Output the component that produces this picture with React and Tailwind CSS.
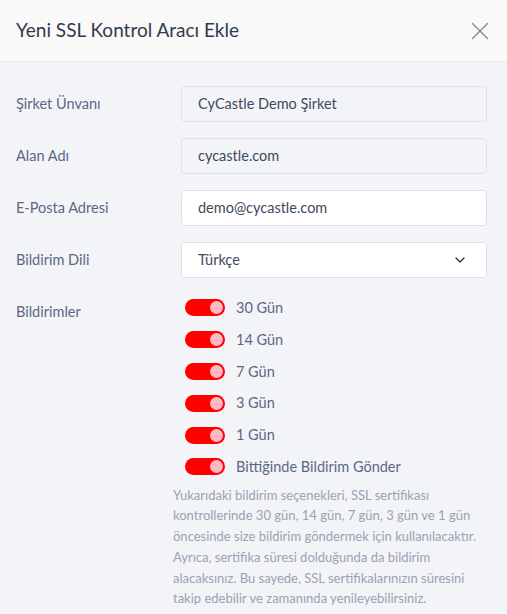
import { X, ChevronDown } from "lucide-react";

const toggles = ["30 Gün", "14 Gün", "7 Gün", "3 Gün", "1 Gün", "Bittiğinde Bildirim Gönder"];

const helpLines = [
  "Yukarıdaki bildirim seçenekleri, SSL sertifikası",
  "kontrollerinde 30 gün, 14 gün, 7 gün, 3 gün ve 1 gün",
  "öncesinde size bildirim göndermek için kullanılacaktır.",
  "Ayrıca, sertifika süresi dolduğunda da bildirim",
  "alacaksınız. Bu sayede, SSL sertifikalarınızın süresini",
  "takip edebilir ve zamanında yenileyebilirsiniz.",
];

const Field = ({ label, children }) => (
  <div className="flex items-center h-[36px] mb-[16px]">
    <div className="w-[165px] text-[14.5px] text-[#5b6882]">{label}</div>
    <div className="flex-1">{children}</div>
  </div>
);

const Toggle = () => (
  <div className="w-[40px] h-[17px] rounded-full bg-[#ff0000] flex items-center justify-end pr-[2px]">
    <div className="w-[13px] h-[13px] rounded-full bg-[#ffb8c4]" />
  </div>
);

export default function App() {
  return (
    <div className="w-[507px] h-[614px] bg-[#f3f4f8] font-['Lato',sans-serif] overflow-hidden">
      {/* Header */}
      <div className="h-[62px] bg-[#f9f9f9] border-b border-[#e6e8ec] flex items-center justify-between pl-[16px] pr-[12px]">
        <h2 className="text-[19px] text-[#2f3a4c]">Yeni SSL Kontrol Aracı Ekle</h2>
        <X className="w-[30px] h-[30px] text-[#888888]" strokeWidth={1.1} />
      </div>

      {/* Body */}
      <div className="pl-[16px] pr-[20px] pt-[24px]">
        <Field label="Şirket Ünvanı">
          <div className="h-[36px] rounded-[4px] border border-[#dde1e8] bg-[#f3f4f8] px-[16px] flex items-center text-[14.5px] text-[#3f4a5c]">
            CyCastle Demo Şirket
          </div>
        </Field>
        <Field label="Alan Adı">
          <div className="h-[36px] rounded-[4px] border border-[#dde1e8] bg-[#f3f4f8] px-[16px] flex items-center text-[14.5px] text-[#3f4a5c]">
            cycastle.com
          </div>
        </Field>
        <Field label="E-Posta Adresi">
          <div className="h-[36px] rounded-[4px] border border-[#dde1e8] bg-white px-[16px] flex items-center text-[14.5px] text-[#3f4a5c]">
            demo@cycastle.com
          </div>
        </Field>
        <Field label="Bildirim Dili">
          <div className="h-[36px] rounded-[4px] border border-[#dde1e8] bg-white pl-[16px] pr-[18px] flex items-center justify-between text-[14.5px] text-[#3f4a5c]">
            <span>Türkçe</span>
            <ChevronDown className="w-[16px] h-[16px] text-[#333]" strokeWidth={2} />
          </div>
        </Field>

        <div className="flex">
          <div className="w-[165px] text-[14.5px] text-[#5b6882] pt-[7px]">Bildirimler</div>
          <div className="flex-1 -ml-[8px]">
            <div className="pl-[12px] -mt-[2px]">
              {toggles.map((t) => (
                <div key={t} className="flex items-center gap-[11px] h-[31.8px]">
                  <Toggle />
                  <span className="text-[14.5px] text-[#5b6882]">{t}</span>
                </div>
              ))}
            </div>
            <p className="mt-[2px] text-[13px] leading-[20.7px] text-[#9aa2b4] whitespace-nowrap">
              {helpLines.map((l) => (
                <span key={l} className="block">{l}</span>
              ))}
            </p>
          </div>
        </div>
      </div>
    </div>
  );
}
